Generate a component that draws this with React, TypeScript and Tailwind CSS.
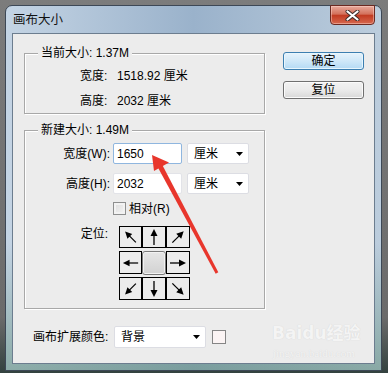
import React from "react";

const FONT = "font-['Liberation_Sans','Noto_Sans_CJK_SC',sans-serif]";

function Arrow({ rot }: { rot: number }) {
  return (
    <svg width="22" height="22" viewBox="0 0 22 22">
      <g transform={`rotate(${rot} 11 11)`}>
        <line x1="11" y1="9" x2="11" y2="19" stroke="#000" strokeWidth="1.3" />
        <polygon points="11,3 7.5,10 14.5,10" fill="#000" />
      </g>
    </svg>
  );
}

function Cell({ rot }: { rot: number }) {
  return (
    <div className="border border-black bg-[#ececec] flex items-center justify-center">
      <Arrow rot={rot} />
    </div>
  );
}

function Caret() {
  return (
    <svg width="7" height="4" viewBox="0 0 7 4">
      <polygon points="0,0 7,0 3.5,4" fill="#000" />
    </svg>
  );
}

function Select({ label, w }: { label: string; w: string }) {
  return (
    <div
      className={`${w} h-[21px] bg-white border border-[#dcdde3] rounded-[2px] flex items-center justify-between pl-[6px] pr-[5px]`}
    >
      <span className="leading-[16px]">{label}</span>
      <Caret />
    </div>
  );
}

function GroupBox({
  legend,
  className,
  children,
}: {
  legend: React.ReactNode;
  className: string;
  children: React.ReactNode;
}) {
  return (
    <div
      className={`relative border border-[#a8a8a8] shadow-[1px_1px_0_#ffffff,inset_1px_1px_0_#ffffff] ${className}`}
    >
      <div className="absolute -top-[9px] left-[13px] px-[3px] bg-[#ececec] leading-[16px] whitespace-nowrap">
        {legend}
      </div>
      {children}
    </div>
  );
}

export default function App() {
  return (
    <div
      className={`relative w-[388px] h-[373px] overflow-hidden pl-[5px] pt-[5px] text-[12px] text-black ${FONT} bg-[linear-gradient(to_bottom,#7c7c7c,#6b6b6b_85%,#33423f)]`}
    >
      <div className="w-[377px] h-[366px] rounded-t-[7px] border border-[#3d4856] flex flex-col bg-[linear-gradient(to_bottom,rgba(0,0,0,0)_65%,rgba(95,140,120,0.55)),linear-gradient(90deg,#c4d4e4,#9ab2cb_50%,#bccddd)]">
        {/* title bar */}
        <div className="h-[27px] flex justify-between">
          <div className="pl-[7px] flex items-center leading-[16px] text-[12.5px] text-[#111]">
            画布大小
          </div>
          <div className="self-start -mt-px mr-[6px] w-[45px] h-[20px] rounded-b-[4px] border border-[#6b2a22] flex items-center justify-center bg-[linear-gradient(to_bottom,#e9aa9c,#d3705b_45%,#c23b22_52%,#d6684f)] shadow-[inset_0_0_0_1px_rgba(255,220,210,0.45)]">
            <svg width="15" height="11" viewBox="0 0 15 11">
              <path d="M2.5 1.5 L12.5 9.5 M12.5 1.5 L2.5 9.5" stroke="#3a2a28" strokeWidth="4" strokeLinecap="round" />
              <path d="M2.5 1.5 L12.5 9.5 M12.5 1.5 L2.5 9.5" stroke="#ffffff" strokeWidth="2.2" strokeLinecap="round" />
            </svg>
          </div>
        </div>

        {/* client area */}
        <div className="relative flex-1 mx-[6px] mb-[6px] border border-[#6c7d8f] bg-[#ececec] pl-[11px] pt-[19px]">
          <div className="flex gap-[18px]">
            {/* left column */}
            <div className="w-[241px] flex flex-col gap-[16px]">
              <GroupBox legend="当前大小: 1.37M" className="h-[61px] pt-[14px] pl-[55px] flex flex-col gap-[9px]">
                <div className="flex leading-[16px]">
                  <span className="w-[37px]">宽度:</span>
                  <span>1518.92 厘米</span>
                </div>
                <div className="flex leading-[16px]">
                  <span className="w-[37px]">高度:</span>
                  <span>2032 厘米</span>
                </div>
              </GroupBox>

              <GroupBox legend="新建大小: 1.49M" className="pt-[12px] pb-[8px] flex flex-col">
                <div className="flex items-center h-[21px]">
                  <span className="w-[85px] text-right leading-[16px]">宽度(W):</span>
                  <div className="ml-[3px] w-[69px] h-[21px] bg-white border border-[#8fb6df] rounded-[2px] pl-[3px] flex items-center leading-[16px]">
                    1650
                  </div>
                  <div className="ml-[5px]">
                    <Select label="厘米" w="w-[62px]" />
                  </div>
                </div>
                <div className="flex items-center h-[21px] mt-[9px]">
                  <span className="w-[85px] text-right leading-[16px]">高度(H):</span>
                  <div className="ml-[3px] w-[69px] h-[21px] bg-white border border-[#e2e3e8] rounded-[2px] pl-[3px] flex items-center leading-[16px]">
                    2032
                  </div>
                  <div className="ml-[5px]">
                    <Select label="厘米" w="w-[62px]" />
                  </div>
                </div>
                <div className="flex items-center h-[13px] mt-[8px] ml-[88px] gap-[3px]">
                  <div className="w-[13px] h-[13px] border border-[#8e8f8f] bg-[linear-gradient(135deg,#dcdcdc,#f4f4f4)] shadow-[inset_0_0_0_2px_#f2f2f2]" />
                  <span className="leading-[16px]">相对(R)</span>
                </div>
                <div className="flex items-start mt-[11px]">
                  <span className="w-[83px] text-right leading-[16px]">定位:</span>
                  <div className="ml-[11px] grid grid-cols-[23px_24px_24px] grid-rows-[22px_23px_23px] gap-y-[3px]">
                    <Cell rot={-45} />
                    <Cell rot={0} />
                    <Cell rot={45} />
                    <Cell rot={-90} />
                    <div className="flex items-center justify-center">
                      <div className="w-[24px] h-[24px] rounded-[3px] border border-[#7a7a7a] bg-[linear-gradient(to_bottom,#e6e6e6,#d2d2d2)] shadow-[inset_0_0_0_1px_#f2f2f2]" />
                    </div>
                    <Cell rot={90} />
                    <Cell rot={-135} />
                    <Cell rot={180} />
                    <Cell rot={135} />
                  </div>
                </div>
              </GroupBox>
            </div>

            {/* buttons */}
            <div className="w-[81px] -mt-px flex flex-col gap-[11px]">
              <div className="h-[18px] rounded-[3px] border border-[#3c7fb1] bg-[linear-gradient(to_bottom,#e6f3fc,#cfe8f8_50%,#b4daf4)] shadow-[inset_0_0_0_1px_#e8f6fd] flex items-center justify-center leading-[16px]">
                确定
              </div>
              <div className="h-[18px] rounded-[3px] border border-[#707070] bg-[linear-gradient(to_bottom,#f2f2f2,#ebebeb_50%,#d8d8d8)] shadow-[inset_0_0_0_1px_#fbfbfb] flex items-center justify-center leading-[16px]">
                复位
              </div>
            </div>
          </div>

          {/* bottom row */}
          <div className="flex items-center mt-[17px] ml-[9px]">
            <span className="w-[81px] leading-[16px] whitespace-nowrap">画布扩展颜色:</span>
            <Select label="背景" w="w-[92px] h-[22px]" />
            <div className="ml-[6px] w-[14px] h-[14px] border border-[#858585] bg-[#fbf4f4]" />
          </div>

          {/* watermark */}
          <div className="absolute left-[259px] top-[290px] pointer-events-none text-[#f4f4f4] [text-shadow:0_0_1px_#d0d0d0]">
            <div className="text-[17px] font-bold leading-[18px] font-['DejaVu_Sans','Noto_Sans_CJK_SC',sans-serif]">Baidu经验</div>
            <div className="text-[11px] leading-[14px] mt-[4px] ml-[1px] font-['Liberation_Serif',serif]">jingyan.baidu.com</div>
          </div>
        </div>
      </div>

      {/* red annotation arrow */}
      <svg className="absolute left-0 top-0 pointer-events-none" width="388" height="373" viewBox="0 0 388 373">
        <polygon points="162.2,164.8 218.3,272.3 215.7,273.7 157.8,167.2" fill="#e8362c" />
        <polygon points="152,155 169,162.5 154,171" fill="#e8362c" />
      </svg>
    </div>
  );
}
